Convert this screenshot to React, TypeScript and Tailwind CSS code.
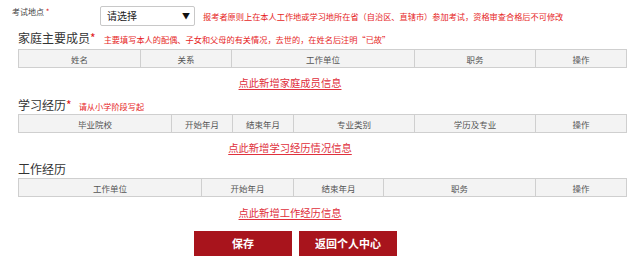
import React from "react";

type Col = { label: string; w: number };

const familyCols: Col[] = [
  { label: "姓名", w: 122 },
  { label: "关系", w: 91 },
  { label: "工作单位", w: 183 },
  { label: "职务", w: 121 },
  { label: "操作", w: 91 },
];

const eduCols: Col[] = [
  { label: "毕业院校", w: 153 },
  { label: "开始年月", w: 61 },
  { label: "结束年月", w: 61 },
  { label: "专业类别", w: 121 },
  { label: "学历及专业", w: 121 },
  { label: "操作", w: 91 },
];

const workCols: Col[] = [
  { label: "工作单位", w: 183 },
  { label: "开始年月", w: 92 },
  { label: "结束年月", w: 90 },
  { label: "职务", w: 152 },
  { label: "操作", w: 91 },
];

function HeaderTable({ cols }: { cols: Col[] }) {
  return (
    <table className="ml-[18px] w-[608px] table-fixed border-collapse">
      <colgroup>
        {cols.map((c) => (
          <col key={c.label} style={{ width: c.w }} />
        ))}
      </colgroup>
      <thead>
        <tr>
          {cols.map((c) => (
            <th
              key={c.label}
              className="h-[18px] border border-[#cfcfcf] bg-[#f3f3f3] p-0 text-center text-[8.5px] font-normal leading-[16px] text-[#555]"
            >
              {c.label}
            </th>
          ))}
        </tr>
      </thead>
    </table>
  );
}

function AddLink({ text, className }: { text: string; className: string }) {
  return (
    <div className={`h-[14px] w-[580px] text-center text-[10.3px] leading-[14px] ${className}`}>
      <a href="#" className="text-[#e0303c] underline underline-offset-2">
        {text}
      </a>
    </div>
  );
}

function SectionTitle({ title, star, note, noteGap, className }: { title: string; star?: boolean; note?: string; noteGap: string; className: string }) {
  return (
    <div className={`flex h-[16px] items-baseline pl-[18px] ${className}`}>
      <span className="text-[12px] leading-[16px] text-[#333]">
        {title}
        {star && <span className="text-[#e02020]">*</span>}
      </span>
      {note && <span className={`${noteGap} text-[8.2px] text-[#e61e1e]`}>{note}</span>}
    </div>
  );
}

export default function App() {
  return (
    <div className="h-[268px] w-[640px] overflow-hidden bg-white" style={{ fontFamily: '"Noto Sans CJK SC", "Noto Sans", sans-serif' }}>
      {/* 考试地点 */}
      <div className="flex items-start pt-[6px]">
        <div className="w-[100px] pl-[12px] pt-[1px] text-[8px] leading-[10px] text-[#444]">
          考试地点 <span className="text-[#e02020]">*</span>
        </div>
        <div className="flex h-[20px] w-[95px] items-center justify-between rounded-[2px] border border-[#c8c8c8] bg-white pl-[6px] pr-[4px]">
          <span className="text-[10px] leading-[12px] text-[#222]">请选择</span>
          <span className="text-[8px] leading-[10px] text-[#111]">▼</span>
        </div>
        <div className="ml-[8px] text-[8.2px] leading-[20px] text-[#e61e1e]">
          报考者原则上在本人工作地或学习地所在省（自治区、直辖市）参加考试，资格审查合格后不可修改
        </div>
      </div>

      <SectionTitle
        title="家庭主要成员"
        star
        note="主要填写本人的配偶、子女和父母的有关情况，去世的，在姓名后注明“已故”"
        noteGap="ml-[8px]"
        className="mt-[4px]"
      />
      <div className="mt-[3px]">
        <HeaderTable cols={familyCols} />
      </div>
      <AddLink text="点此新增家庭成员信息" className="mt-[8px]" />

      <SectionTitle title="学习经历" star note="请从小学阶段写起" noteGap="ml-[7px]" className="mt-[7px]" />
      <div className="mt-[1px]">
        <HeaderTable cols={eduCols} />
      </div>
      <AddLink text="点此新增学习经历情况信息" className="mt-[8px]" />

      <SectionTitle title="工作经历" noteGap="" className="mt-[6px]" />
      <div className="mt-[1px]">
        <HeaderTable cols={workCols} />
      </div>
      <AddLink text="点此新增工作经历信息" className="mt-[9px]" />

      <div className="mt-[11px] flex gap-[7px] pl-[194px]">
        <button className="h-[25px] w-[98px] bg-[#a8141c] text-[11px] font-bold text-white">保存</button>
        <button className="h-[25px] w-[98px] bg-[#a8141c] text-[11px] font-bold text-white">返回个人中心</button>
      </div>
    </div>
  );
}
